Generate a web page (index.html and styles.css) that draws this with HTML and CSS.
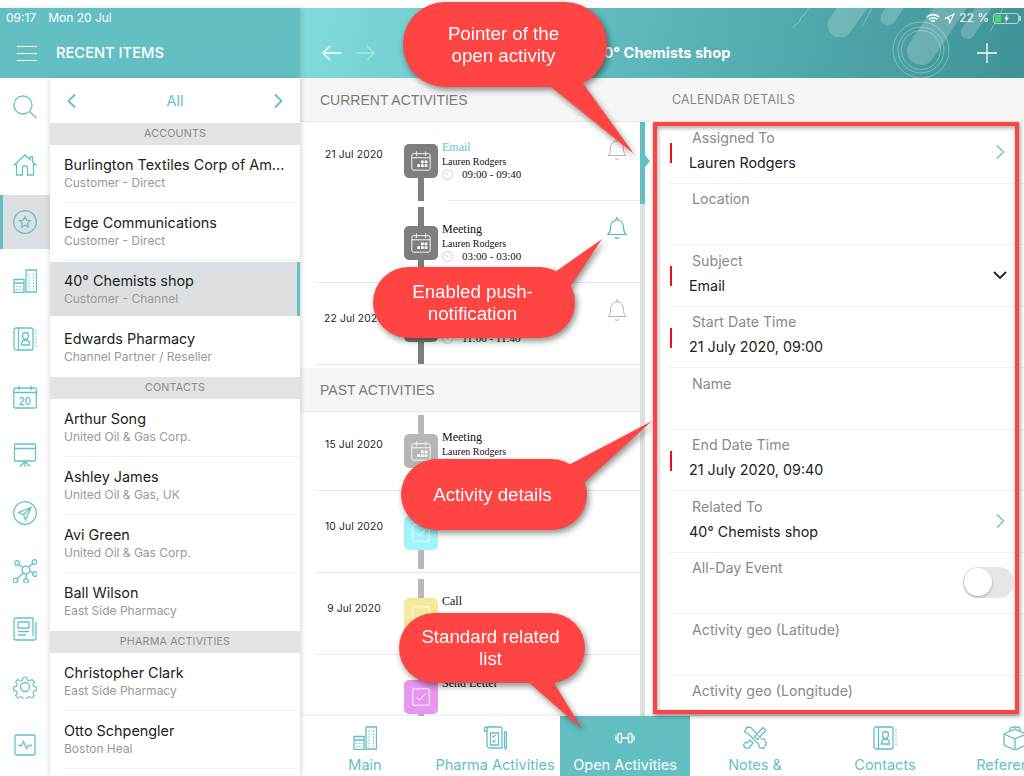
FILE: index.html
```html
<!DOCTYPE html>
<html lang="en">
<head>
  <meta charset="UTF-8">
  <title>Recent Items</title>
  <link rel="stylesheet" href="styles.css">
</head>
<body>
  <svg class="defs" width="0" height="0">
    <symbol id="i-buildings" viewBox="0 0 24 24"><path d="M1 10.500h10v13H1zM1 14h10M13 1h10.500v22H13z"/><path class="dots" d="M3 17.500h6.500M3 20.500h6.500M16 4.500v16M20.500 4.500v16"/></symbol>
    <symbol id="i-book" viewBox="0 0 24 24"><rect x="1" y="1" width="19" height="22" rx="2"/><path d="M5.500 1v22M8.500 18c0-3.500 1.500-5 4-5s4 1.500 4 5zM12.500 12.500a3 3.500 0 1 0 0-7 3 3.500 0 0 0 0 7z"/><path class="dots" d="M23 3v18"/></symbol>
    <symbol id="i-bell" viewBox="0 0 20 24"><path d="M1 18.500c1.800-1.800 2.500-3.500 2.500-7 0-4.500 2.500-7.500 6.500-7.500s6.500 3 6.500 7.500c0 3.500.7 5.200 2.500 7zM9 3.500a1 2 0 0 1 2 0M7.800 21.500c1.200 1 3.200 1 4.400 0"/></symbol>
    <symbol id="i-cal" viewBox="0 0 24 24"><rect x="2" y="4" width="20" height="18" rx="2"/><path d="M2 8.500h20M7 1.500v5M17 1.500v5"/><path class="fill" d="M12 11.500h3v3h-3zM16 11.500h3v3h-3zM8 15.500h3v3H8zM12 15.500h3v3h-3zM16 15.500h3v3h-3z"/></symbol>
    <symbol id="i-check" viewBox="0 0 24 24"><rect x="3" y="3" width="18" height="18" rx="1"/><path d="M7.500 12.500l3 3 6-7"/></symbol>
    <symbol id="i-clock" viewBox="0 0 12 12"><circle cx="6" cy="6" r="5.400"/><path d="M4 3.500L6.500 7"/></symbol>
    <symbol id="i-right" viewBox="0 0 10 16"><path d="M2 1.500L8.500 8 2 14.500"/></symbol>
  </svg>

  <div class="top-gap"></div>

  <div class="app">
    <aside class="side">
      <header class="side-head">
        <div class="status"><span>09:17</span><span class="status-date">Mon 20 Jul</span></div>
        <div class="side-title">
          <span class="burger"><i></i><i></i><i></i></span>
          <span>RECENT ITEMS</span>
        </div>
      </header>
      <div class="side-body">
        <nav class="rail">
          <a class="rail-item"><svg class="ico" viewBox="0 0 24 24"><circle cx="10" cy="10" r="9"/><path d="M16.500 16.500L23.500 23"/></svg></a>
          <a class="rail-item"><svg class="ico" viewBox="0 0 24 24"><path d="M.5 12.500L12 2l5 4.500V4h2.500v4.800L23.500 12.500M3.500 10.500V22h6v-7c0-3.300 5-3.300 5 0v7h6V10.500"/></svg></a>
          <a class="rail-item on"><svg class="ico" viewBox="0 0 24 24"><circle cx="12" cy="12" r="11.300"/><path d="M12 6.800l1.700 3.400 3.700.5-2.700 2.600.7 3.700-3.400-1.800-3.300 1.800.6-3.700-2.700-2.600 3.700-.5z"/></svg></a>
          <a class="rail-item"><svg class="ico"><use href="#i-buildings"/></svg></a>
          <a class="rail-item"><svg class="ico"><use href="#i-book"/></svg></a>
          <a class="rail-item"><svg class="ico" viewBox="0 0 24 24"><rect x=".8" y="3" width="22.500" height="20" rx="1.500"/><path d="M.8 7.500h22.500M6 .5v5M18 .5v5"/><text class="ico-text" x="12" y="19.500">20</text></svg></a>
          <a class="rail-item"><svg class="ico" viewBox="0 0 24 24"><rect x="1.500" y="1" width="21" height="17" rx="1"/><path d="M1.500 5.500h21M12 18v6M7 23.500l5-5 5 5"/></svg></a>
          <a class="rail-item"><svg class="ico" viewBox="0 0 24 24"><circle cx="12" cy="12" r="11.300"/><path d="M18 6.500L5.500 11.500l5 2 2 5.500zM10.500 13.500L18 6.500"/></svg></a>
          <a class="rail-item"><svg class="ico" viewBox="0 0 24 24"><circle cx="13" cy="11" r="3.800"/><circle cx="4" cy="4" r="2.300"/><circle cx="21.500" cy="3" r="2.300"/><circle cx="22" cy="15" r="2.300"/><circle cx="13" cy="22" r="2.300"/><circle cx="2.500" cy="21.500" r="2.300"/><path d="M6 5.500l4 3M19.700 4.500l-4 3.500M20 14l-3.500-1.800M13 14.800v5M4 20l6.300-6.300"/></svg></a>
          <a class="rail-item"><svg class="ico" viewBox="0 0 24 24"><path d="M20 19V1H3a2 2 0 0 0-2 2v18a2 2 0 0 0 2 2h18a2 2 0 0 0 2-2V5"/><path d="M5 5h11v6H5zM5 14.500h11M5 18h8"/></svg></a>
          <a class="rail-item"><svg class="ico" viewBox="0 0 24 24"><circle cx="12" cy="12" r="4.500"/><path d="M10 .8h4l.8 3.300 2.300 1 2.900-1.800 2.800 2.800-1.800 2.900 1 2.300 3 .7v4l-3 .7-1 2.300 1.800 2.900-2.800 2.800-2.900-1.800-2.300 1-.8 2.300h-4l-.8-2.300-2.300-1-2.900 1.800-2.800-2.800 1.800-2.900-1-2.300-3-.7v-4l3-.7 1-2.300-1.800-2.900 2.800-2.800 2.900 1.800 2.300-1z" transform="translate(1.500 1.500) scale(.875)"/></svg></a>
          <a class="rail-item"><svg class="ico" viewBox="0 0 24 24"><rect x="2" y="2" width="20" height="20" rx="1.500"/><path d="M5 12.500h3.500l2-4 3 7 2-3H19"/></svg></a>
        </nav>
        <section class="recent">
          <div class="filter">
            <svg class="chev flip"><use href="#i-right"/></svg>
            <span>All</span>
            <svg class="chev"><use href="#i-right"/></svg>
          </div>
          <h4 class="group">ACCOUNTS</h4>
          <a class="item"><b>Burlington Textiles Corp of Am...</b><small>Customer - Direct</small></a>
          <a class="item"><b>Edge Communications</b><small>Customer - Direct</small></a>
          <a class="item on"><b>40° Chemists shop</b><small>Customer - Channel</small></a>
          <a class="item last"><b>Edwards Pharmacy</b><small>Channel Partner / Reseller</small></a>
          <h4 class="group">CONTACTS</h4>
          <a class="item"><b>Arthur Song</b><small>United Oil &amp; Gas Corp.</small></a>
          <a class="item"><b>Ashley James</b><small>United Oil &amp; Gas, UK</small></a>
          <a class="item"><b>Avi Green</b><small>United Oil &amp; Gas Corp.</small></a>
          <a class="item last"><b>Ball Wilson</b><small>East Side Pharmacy</small></a>
          <h4 class="group">PHARMA ACTIVITIES</h4>
          <a class="item"><b>Christopher Clark</b><small>East Side Pharmacy</small></a>
          <a class="item"><b>Otto Schpengler</b><small>Boston Heal</small></a>
        </section>
      </div>
    </aside>

    <main class="detail">
      <header class="detail-head">
        <svg class="decor" viewBox="0 0 724 70" preserveAspectRatio="none">
          <g class="decor-pills">
            <path d="M540 17L562 -14" stroke-width="25"/>
            <path d="M588 10L604 -14" stroke-width="15"/>
            <path d="M621 43L654 -6" stroke-width="28"/>
            <path d="M668 24L690 -10" stroke-width="14"/>
          </g>
          <g class="decor-lines">
            <circle cx="621" cy="42" r="28"/><circle cx="621" cy="42" r="23"/><circle cx="621" cy="42" r="19.500"/>
            <path d="M562 19L572 0M690 24L703 0M493 20c2-5 6-3 7-8s3-3 5-6 3-5 5-6"/>
          </g>
        </svg>
        <div class="status status-right">
          <svg class="st-wifi" viewBox="0 0 16 12"><path d="M1 4.500c4-4 10-4 14 0M3.500 7c2.500-2.500 6.500-2.500 9 0M6 9.500c1-1 3-1 4 0"/></svg>
          <svg class="st-loc" viewBox="0 0 12 12"><path d="M11 1L1 6h4.500L6 11z"/></svg>
          <span>22 %</span>
          <span class="battery"><i></i><svg viewBox="0 0 8 12"><path d="M5 0L1 7h2.500L2.500 12 7 4.500H4.500z"/></svg></span>
        </div>
        <div class="detail-nav">
          <svg class="arrow" viewBox="0 0 20 16"><path d="M19.500 8H1M8 1L1 8l7 7"/></svg>
          <svg class="arrow faded" viewBox="0 0 20 16"><path d="M.5 8H19M12 1l7 7-7 7"/></svg>
          <span class="detail-title">40° Chemists shop</span>
          <svg class="plus" viewBox="0 0 20 20"><path d="M10 0v20M0 10h20"/></svg>
        </div>
      </header>

      <div class="panes">
        <section class="activities">
          <div class="timeline">
            <h3 class="strip">CURRENT ACTIVITIES</h3>
            <article class="act first solo inner-line">
              <time>21 Jul 2020</time>
              <div class="node"><i class="bar-top"></i><span class="badge dark"><svg><use href="#i-cal"/></svg></span><i class="bar-bot"></i></div>
              <div class="act-text"><em class="teal">Email</em><span>Lauren Rodgers</span><span class="when"><svg><use href="#i-clock"/></svg>09:00 - 09:40</span></div>
              <svg class="bell"><use href="#i-bell"/></svg>
            </article>
            <article class="act">
              <time></time>
              <div class="node"><i class="bar-top"></i><span class="badge dark"><svg><use href="#i-cal"/></svg></span><i class="bar-bot"></i></div>
              <div class="act-text"><em>Meeting</em><span>Lauren Rodgers</span><span class="when"><svg><use href="#i-clock"/></svg>03:00 - 03:00</span></div>
              <svg class="bell active"><use href="#i-bell"/></svg>
            </article>
            <article class="act">
              <time>22 Jul 2020</time>
              <div class="node"><i class="bar-top"></i><span class="badge dark"><svg><use href="#i-cal"/></svg></span><i class="bar-bot"></i></div>
              <div class="act-text"><em>&nbsp;</em><span>&nbsp;</span><span class="when"><svg><use href="#i-clock"/></svg>11:00 - 11:40</span></div>
              <svg class="bell"><use href="#i-bell"/></svg>
            </article>

            <h3 class="strip past">PAST ACTIVITIES</h3>
            <article class="act first old">
              <time>15 Jul 2020</time>
              <div class="node"><i class="bar-top"></i><span class="badge grey"><svg><use href="#i-cal"/></svg></span><i class="bar-bot"></i></div>
              <div class="act-text"><em>Meeting</em><span>Lauren Rodgers</span><span class="when"><svg><use href="#i-clock"/></svg></span></div>
            </article>
            <article class="act old">
              <time>10 Jul 2020</time>
              <div class="node"><i class="bar-top"></i><span class="badge cyan"><svg><use href="#i-check"/></svg></span><i class="bar-bot"></i></div>
              <div class="act-text"></div>
            </article>
            <article class="act old">
              <time>9 Jul 2020</time>
              <div class="node"><i class="bar-top"></i><span class="badge yellow"><svg><use href="#i-check"/></svg></span><i class="bar-bot"></i></div>
              <div class="act-text"><em>Call</em></div>
            </article>
            <article class="act old">
              <time></time>
              <div class="node"><i class="bar-top"></i><span class="badge pink"><svg><use href="#i-check"/></svg></span><i class="bar-bot"></i></div>
              <div class="act-text"><em>Send Letter</em></div>
            </article>
          </div>
          <div class="scroll"><i class="thumb"></i></div>
        </section>

        <section class="fields">
          <h3 class="strip cal">CALENDAR DETAILS</h3>
          <div class="field"><i class="mark on"></i><div class="field-text"><label>Assigned To</label><p>Lauren Rodgers</p></div><svg class="chev trail"><use href="#i-right"/></svg></div>
          <div class="field"><i class="mark"></i><div class="field-text"><label>Location</label></div></div>
          <div class="field"><i class="mark on"></i><div class="field-text"><label>Subject</label><p>Email</p></div><svg class="chev-down" viewBox="0 0 14 8"><path d="M1 1l6 6 6-6"/></svg></div>
          <div class="field"><i class="mark on"></i><div class="field-text"><label>Start Date Time</label><p>21 July 2020, 09:00</p></div></div>
          <div class="field"><i class="mark"></i><div class="field-text"><label>Name</label></div></div>
          <div class="field"><i class="mark on"></i><div class="field-text"><label>End Date Time</label><p>21 July 2020, 09:40</p></div></div>
          <div class="field"><i class="mark"></i><div class="field-text"><label>Related To</label><p>40° Chemists shop</p></div><svg class="chev trail"><use href="#i-right"/></svg></div>
          <div class="field"><i class="mark"></i><div class="field-text"><label>All-Day Event</label></div><span class="toggle"><i></i></span></div>
          <div class="field"><i class="mark"></i><div class="field-text"><label>Activity geo (Latitude)</label></div></div>
          <div class="field"><i class="mark"></i><div class="field-text"><label>Activity geo (Longitude)</label></div></div>
        </section>
      </div>

      <nav class="tabs">
        <a class="tab"><svg class="ico"><use href="#i-buildings"/></svg><span>Main</span></a>
        <a class="tab"><svg class="ico" viewBox="0 0 24 24"><path d="M4 5V3a2 2 0 0 1 2-2h11a2 2 0 0 1 2 2v19H7a3 3 0 0 1-3-3zM4 5H1.500V2.500A1.500 1.500 0 0 1 3 1h3M7.500 7h8v12h-8zM9.500 10l1 1 2-2M9.500 15l1 1 2-2M21.500 6v15l1 2 1-2V6z"/></svg><span>Pharma Activities</span></a>
        <a class="tab on"><svg class="ico" viewBox="0 0 24 24"><path d="M8 12h8M3 9.500v5M21 9.500v5M6 7.500h1.500a1 1 0 0 1 1 1v7a1 1 0 0 1-1 1H6a1 1 0 0 1-1-1v-7a1 1 0 0 1 1-1zM16.500 7.500H18a1 1 0 0 1 1 1v7a1 1 0 0 1-1 1h-1.500a1 1 0 0 1-1-1v-7a1 1 0 0 1 1-1z"/></svg><span>Open Activities</span></a>
        <a class="tab"><svg class="ico" viewBox="0 0 24 24"><path d="M4 1l4 .5 10 11 3.500 1 2 4-3 5-4-1-1-3.500L5 7.500 1.500 6zM20 1.500l3 3-8.500 9-3-3zM7 14l3 3-4 5c-3 1.500-6-1.500-5-4 .5-1.500 1.500-2 3-1z"/></svg><span>Notes &amp;</span></a>
        <a class="tab"><svg class="ico"><use href="#i-book"/></svg><span>Contacts</span></a>
        <a class="tab"><svg class="ico" viewBox="0 0 24 24"><path d="M1 8l11-5 11 5v11l-11 5-11-5zM1 8l11 5 11-5M12 13v11M7 5V2.500c0-2 10-2 10 0V5"/></svg><span>References</span></a>
      </nav>
    </main>
  </div>

  <!-- overlays drawn on the screenshot -->
  <div class="red-frame"></div>

  <div class="callout c-pointer">
    <svg class="tail"><polygon points="142,80 231,152 179,80"/></svg>
    <span>Pointer of the<br>open activity</span>
  </div>
  <div class="callout c-push">
    <svg class="tail"><polygon points="175,10 229,-28 197,20"/></svg>
    <span>Enabled push-<br>notification</span>
  </div>
  <div class="callout c-details">
    <svg class="tail"><polygon points="160,10 251,-38 176,30"/></svg>
    <span>Activity details</span>
  </div>
  <div class="callout c-related">
    <svg class="tail"><polygon points="119,60 183,116 149,60"/></svg>
    <span>Standard related<br>list</span>
  </div>
</body>
</html>
```

FILE: styles.css
```css
* {
  box-sizing: border-box;
}
html, body {
  margin: 0;
  padding: 0;
  height: 776px;
  overflow: hidden;
}
body {
  position: relative;
  background: #fff;
  font-family: Inter, "Liberation Sans", sans-serif;
  color: #222;
}
.defs {
  position: absolute;
}
i, em {
  font-style: normal;
}
svg {
  display: block;
  fill: none;
  stroke: currentColor;
}
.top-gap {
  height: 8px;
}
.app {
  display: flex;
  height: 768px;
}

/* left column */
.side {
  width: 300px;
  display: flex;
  flex-direction: column;
  flex: none;
  position: relative;
  z-index: 2;
  box-shadow: 2px 0 5px rgba(0, 0, 0, .12);
}
.side-head {
  height: 70px;
  background: #64bfc3;
  color: #fff;
  flex: none;
}
.status {
  height: 20px;
  padding-left: 6px;
  font-size: 12px;
  line-height: 20px;
}
.status-date {
  margin-left: 12px;
}
.side-title {
  display: flex;
  align-items: center;
  height: 50px;
  padding: 0 0 0 17px;
  gap: 19px;
  font-size: 14.700px;
  font-weight: 500;
}
.burger {
  display: flex;
  flex-direction: column;
  gap: 6px;
  width: 20px;
}
.burger i {
  height: 1px;
  background: #fff;
}
.side-body {
  display: flex;
  flex: 1;
  min-height: 0;
}
.rail {
  width: 50px;
  flex: none;
  color: #63c3c7;
  background: #fff;
}
.rail-item {
  display: flex;
  align-items: center;
  justify-content: center;
  height: 58px;
}
.rail-item.on {
  height: 54px;
  margin: 1px 0 3px;
  padding-right: 3px;
  background: #dde0e3;
  border-left: 3px solid #64bfc3;
}
.ico {
  width: 24px;
  height: 24px;
  stroke-width: 1.300;
}
.dots {
  stroke-dasharray: 1.500 1.500;
  stroke-width: 1;
}
.ico-text {
  font-size: 10px;
  font-family: "Liberation Sans", sans-serif;
  text-anchor: middle;
  fill: currentColor;
  stroke-width: .3;
  letter-spacing: .5px;
}
.recent {
  flex: 1;
  min-width: 0;
  background: #fff;
  box-shadow: -2px 0 4px rgba(0, 0, 0, .1);
}
.filter {
  display: flex;
  align-items: center;
  justify-content: space-between;
  height: 45px;
  padding: 0 17px;
  color: #64bfc3;
  font-size: 14.500px;
}
.chev {
  width: 10px;
  height: 16px;
  stroke-width: 1.800;
  color: #64bfc3;
}
.flip {
  transform: scaleX(-1);
}
.group {
  height: 22px;
  margin: 0;
  background: #e3e3e3;
  color: #8a8a8a;
  font-size: 10.700px;
  font-weight: 400;
  line-height: 22px;
  text-align: center;
  letter-spacing: .2px;
}
.item {
  display: block;
  position: relative;
  height: 58px;
  padding: 10px 0 0 14px;
}
.item::after {
  content: "";
  position: absolute;
  left: 14px;
  right: 0;
  bottom: 0;
  border-bottom: 1px solid #f1f1f1;
}
.item.last::after,
.item.on::after {
  display: none;
}
.item.on {
  height: 54px;
  margin: 1px 0 3px;
  padding-top: 9px;
  background: #dde0e3;
  border-right: 3px solid #64bfc3;
}
.item b {
  display: block;
  font-size: 14.400px;
  font-weight: 400;
  line-height: 20px;
  white-space: nowrap;
}
.item small {
  display: block;
  font-size: 12px;
  line-height: 16px;
  color: #999;
}

/* right part */
.detail {
  flex: 1;
  min-width: 0;
  display: flex;
  flex-direction: column;
}
.detail-head {
  position: relative;
  height: 70px;
  flex: none;
  overflow: hidden;
  color: #fff;
  background: linear-gradient(100deg, #82dcdc 0%, #62bcbf 40%, #3f9396 100%);
}
.decor {
  position: absolute;
  left: 0;
  top: 0;
  width: 100%;
  height: 100%;
}
.decor-pills path {
  stroke: rgba(255, 255, 255, .2);
  stroke-linecap: round;
}
.decor-lines {
  stroke: rgba(255, 255, 255, .3);
  stroke-width: 1;
}
.status-right {
  position: relative;
  display: flex;
  align-items: center;
  justify-content: flex-end;
  gap: 4px;
  padding: 0 5px 0 0;
  font-size: 12px;
}
.st-wifi {
  width: 14px;
  height: 11px;
  stroke-width: 1.900;
}
.st-loc {
  width: 11px;
  height: 11px;
  stroke-width: 1.200;
}
.battery {
  position: relative;
  width: 26px;
  height: 11px;
  border: 1px solid rgba(255, 255, 255, .6);
  border-radius: 3px;
}
.battery::after {
  content: "";
  position: absolute;
  right: -3px;
  top: 2px;
  width: 2px;
  height: 5px;
  background: rgba(255, 255, 255, .6);
}
.battery i {
  position: absolute;
  left: 1px;
  top: 1px;
  width: 6px;
  height: 7px;
  background: #4cd964;
}
.battery svg {
  position: absolute;
  left: 9px;
  top: 0;
  width: 7px;
  height: 9px;
  fill: #fff;
  stroke: none;
}
.detail-nav {
  position: relative;
  display: flex;
  align-items: center;
  height: 50px;
  padding: 0 27px 0 22px;
  gap: 13px;
}
.arrow {
  width: 20px;
  height: 16px;
  stroke-width: 1.300;
}
.arrow.faded {
  opacity: .35;
}
.detail-title {
  position: absolute;
  left: 0;
  right: 0;
  text-align: center;
  font-size: 14.700px;
  font-weight: 700;
}
.plus {
  width: 20px;
  height: 20px;
  margin-left: auto;
  stroke-width: 1.300;
}
.panes {
  flex: 1;
  min-height: 0;
  display: flex;
}
.strip {
  height: 44px;
  margin: 0;
  padding-left: 20px;
  background: #f6f6f6;
  border-bottom: 1px solid #e8e8e8;
  font-family: "Liberation Sans", sans-serif;
  font-size: 14px;
  font-weight: 400;
  line-height: 44px;
  color: #7a7a7a;
}
.strip.past {
  margin-top: 3px;
}
.strip.cal {
  padding-left: 22px;
  font-family: Inter, "Liberation Sans", sans-serif;
  font-size: 12.400px;
  letter-spacing: .2px;
  color: #888;
}

/* activities timeline */
.activities {
  width: 350px;
  flex: none;
  display: flex;
  overflow: hidden;
  background: linear-gradient(#f6f6f6 43px, #e8e8e8 43px, #e8e8e8 44px, #fff 44px);
}
.timeline {
  width: 340px;
  flex: none;
  background: #fff;
}
.act {
  position: relative;
  display: flex;
  height: 82px;
  margin-left: 15px;
  border-bottom: 1px solid #e8e8e8;
}
.act.inner-line {
  border-bottom: none;
}
.act.inner-line::after {
  content: "";
  position: absolute;
  left: 133px;
  right: 0;
  bottom: 0;
  border-bottom: 1px solid #e8e8e8;
}
.act.first {
  height: 79px;
}
.act time {
  width: 78px;
  flex: none;
  padding-top: 28px;
  font-size: 10.300px;
  line-height: 14px;
  letter-spacing: .15px;
  text-align: center;
}
.act.first time {
  padding-top: 25px;
}
.node {
  display: flex;
  flex-direction: column;
  align-items: center;
  width: 34px;
  margin-left: 11px;
  flex: none;
}
.bar-top {
  width: 6px;
  height: 19px;
  margin-top: 6px;
  background: #7e7e7e;
  flex: none;
}
.bar-bot {
  width: 6px;
  flex: 1;
  background: #7e7e7e;
}
.act.first .bar-top {
  margin-top: 3px;
}
.act.solo .bar-top {
  visibility: hidden;
}
.act.old .bar-top,
.act.old .bar-bot {
  background: #b9b9b9;
}
.act.old .bar-bot {
  margin-bottom: 3px;
}
.badge {
  width: 34px;
  height: 34px;
  flex: none;
  padding: 6px;
  border-radius: 5px;
  color: #fff;
}
.badge svg {
  width: 22px;
  height: 22px;
  stroke-width: 1;
}
.fill {
  fill: #fff;
  stroke: none;
}
.dark { background: #7e7e7e; }
.grey { background: #b6b6b6; }
.cyan { background: #9ff5fb; }
.yellow { background: #f5ea9b; }
.pink { background: #e897ee; }
.act-text {
  display: flex;
  flex-direction: column;
  padding: 22px 0 0 4px;
  font-family: "Liberation Serif", serif;
  font-size: 10px;
  line-height: 13.500px;
  color: #111;
}
.act.first .act-text {
  padding-top: 19px;
}
.act-text em {
  font-size: 12px;
}
.act-text .teal {
  color: #64c6ca;
}
.when {
  display: flex;
  align-items: center;
  gap: 9px;
  font-size: 11px;
}
.when svg {
  width: 11px;
  height: 11px;
  color: #bdbdbd;
  stroke-width: .8;
}
.bell {
  position: relative;
  width: 20px;
  height: 24px;
  margin: 15px 13px 0 auto;
  color: #b5b5b5;
  stroke-width: 1;
}
.bell.active {
  color: #4fbcc1;
  stroke-width: 1.200;
}
.scroll {
  position: relative;
  width: 5px;
  margin-top: 44px;
  background: #dfe0e2;
  flex: none;
}
.thumb {
  position: absolute;
  left: 0;
  top: 0;
  width: 5px;
  height: 82px;
  background: #64bfc3;
}
.thumb::after {
  content: "";
  position: absolute;
  left: 5px;
  top: 33px;
  border-left: 5px solid #64bfc3;
  border-top: 6px solid transparent;
  border-bottom: 6px solid transparent;
}

/* calendar fields */
.fields {
  flex: 1;
  min-width: 0;
  overflow: hidden;
  background: #fff;
}
.field {
  display: flex;
  align-items: center;
  height: 61.500px;
  margin-left: 17px;
  border-bottom: 1px solid #f1f1f1;
}
.mark {
  align-self: flex-start;
  width: 2px;
  height: 20px;
  margin: 21px 0 0 3px;
  flex: none;
}
.mark.on {
  background: #f0101c;
}
.field-text {
  align-self: flex-start;
  padding: 5.500px 0 0 17px;
  flex: 1;
}
.field label {
  display: block;
  padding-left: 3px;
  font-size: 14.200px;
  line-height: 20px;
  color: #8a8a8a;
}
.field p {
  margin: 5px 0 0;
  font-size: 14.300px;
  line-height: 20px;
}
.trail {
  margin-right: 19px;
  stroke-width: 1.300;
}
.chev-down {
  width: 14px;
  height: 8px;
  margin: 0 17px 0 0;
  stroke-width: 1.800;
}
.toggle {
  position: relative;
  width: 51px;
  height: 31px;
  margin-right: 10px;
  border-radius: 16px;
  background: #e6e6e8;
}
.toggle i {
  position: absolute;
  left: 1px;
  top: 1px;
  width: 28px;
  height: 28px;
  border-radius: 50%;
  background: #fff;
  box-shadow: 0 1px 3px rgba(0, 0, 0, .3);
}

/* tabs */
.tabs {
  display: flex;
  height: 60px;
  flex: none;
  overflow: hidden;
  background: #fff;
  box-shadow: 0 -1px 3px rgba(0, 0, 0, .1);
  position: relative;
}
.tab {
  display: flex;
  flex-direction: column;
  align-items: center;
  width: 130px;
  flex: none;
  padding-top: 10px;
  color: #64bfc3;
  font-size: 14.500px;
  white-space: nowrap;
}
.tab span {
  margin-top: 5px;
  line-height: 20px;
}
.tab.on {
  background: #64bfc3;
  color: #fff;
}

/* annotations */
.red-frame {
  position: absolute;
  left: 653px;
  top: 122px;
  width: 366px;
  height: 592px;
  border: 4px solid #ff4444;
  box-shadow: 1px 2px 4px rgba(0, 0, 0, .45), inset 1px 2px 4px rgba(0, 0, 0, .35);
}
.callout {
  position: absolute;
  display: flex;
  align-items: center;
  justify-content: center;
  padding-right: 3px;
  border-radius: 42px;
  background: #ff4444;
  color: #fff;
  font-family: "Liberation Sans", sans-serif;
  font-size: 18.700px;
  line-height: 22px;
  text-align: center;
  filter: drop-shadow(2px 3px 3px rgba(0, 0, 0, .45));
}
.callout span {
  position: relative;
}
.tail {
  position: absolute;
  left: 0;
  top: 0;
  width: 1px;
  height: 1px;
  overflow: visible;
  fill: #ff4444;
  stroke: none;
}
.c-pointer {
  left: 403px;
  top: 2px;
  width: 204px;
  height: 85px;
}
.c-push {
  left: 373px;
  top: 267px;
  width: 202px;
  height: 71px;
  border-radius: 36px;
}
.c-details {
  left: 401px;
  top: 459px;
  width: 186px;
  height: 71px;
  border-radius: 36px;
}
.c-related {
  left: 399px;
  top: 613px;
  width: 186px;
  height: 70px;
  border-radius: 35px;
}
```
